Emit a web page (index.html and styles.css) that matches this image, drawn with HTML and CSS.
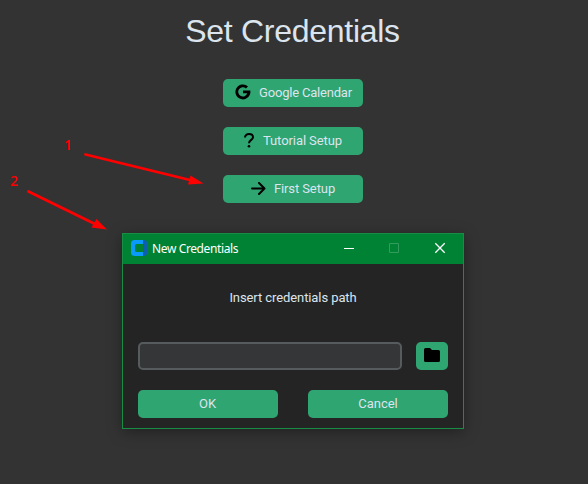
FILE: index.html
```html
<!DOCTYPE html>
<html lang="en">
<head>
<meta charset="utf-8">
<title>Set Credentials</title>
<link rel="stylesheet" href="styles.css">
</head>
<body>
<main class="page">
  <h1 class="heading">Set Credentials</h1>
  <div class="actions">
    <button class="btn google"><svg width="16" height="16" viewBox="0 0 16 16"><path d="M8 6.600h7.300A7.500 7.500 0 1 1 13 2.400l-2.100 2.100A4.600 4.600 0 1 0 12.200 9.300H8z"/></svg><span>Google Calendar</span></button>
    <button class="btn tutorial"><svg width="10" height="15" viewBox="0 0 10 15"><path d="M1 4.600C1 2.200 2.700 1 5 1s4 1.300 4 3.300C9 7 5 6.800 5 10.300" fill="none" stroke="#000" stroke-width="2"/><circle cx="5" cy="13.200" r="1.300"/></svg><span>Tutorial Setup</span></button>
    <button class="btn first"><svg width="15" height="13" viewBox="0 0 15 13"><path d="M1 6.500h12.500M8 1l5.500 5.500L8 12" fill="none" stroke="#000" stroke-width="2" stroke-linecap="round" stroke-linejoin="round"/></svg><span>First Setup</span></button>
  </div>
  <section class="window">
    <header class="titlebar">
      <svg class="logo" width="16" height="16" viewBox="0 0 16 16"><path d="M11 0h2a3 3 0 0 1 3 3v10a3 3 0 0 1-3 3h-2z" fill="#0b5fae"/><path d="M3.500 0H12v4H5.500Q4 4 4 5.500v5Q4 12 5.500 12H12v4H3.500A3.500 3.500 0 0 1 0 12.500v-9A3.500 3.500 0 0 1 3.500 0z" fill="#0a9bfa"/><path d="M11 4h1v8h-1z" fill="#008235"/></svg>
      <span class="title">New Credentials</span>
      <svg class="controls" width="102" height="12" viewBox="0 0 102 12" fill="none"><path d="M0 6.500h10" stroke="#fff"/><path d="M45.500 1.500h9v9h-9z" stroke="#339b5d"/><path d="M91.300 1.300l9.400 9.400M100.700 1.300l-9.400 9.400" stroke="#fff" stroke-width="1.300"/></svg>
    </header>
    <div class="content">
      <label class="prompt" for="path">Insert credentials path</label>
      <div class="path-row">
        <input id="path" class="path" type="text">
        <button class="btn browse" aria-label="Browse"><svg width="16" height="14" viewBox="0 0 16 14"><path d="M1.500 0H6l2 2h6.500A1.500 1.500 0 0 1 16 3.500v9a1.500 1.500 0 0 1-1.500 1.500h-13A1.500 1.500 0 0 1 0 12.500v-11A1.500 1.500 0 0 1 1.500 0z"/></svg></button>
      </div>
      <div class="choices"><button class="btn ok">OK</button><button class="btn">Cancel</button></div>
    </div>
  </section>
  <svg class="arrows" width="588" height="484" viewBox="0 0 588 484" stroke="#f00" fill="#f00"><path d="M85.500 154.500L192 180.500M28.500 191.500L97 225" stroke-width="2.800" stroke-linecap="round"/><path d="M203.500 183.500L190.500 175.500l-2.500 9zM107 229.500L96.500 219l-5 8.500z" stroke="none"/></svg>
  <span class="step one">1</span>
  <span class="step two">2</span>
</main>
</body>
</html>
```

FILE: styles.css
```css
* { box-sizing: border-box; }
body { margin: 0; background: #333; overflow: hidden; }
.page {
  position: relative;
  width: 588px;
  height: 484px;
  display: flex;
  flex-direction: column;
  align-items: center;
  background: #333;
}
.heading {
  margin: 13px 3px 0 0;
  height: 36px;
  font: 400 32px/36px "Liberation Sans", sans-serif;
  letter-spacing: -0.28px;
  color: #dce4ee;
}
.actions {
  display: flex;
  flex-direction: column;
  gap: 20px;
  margin: 30px 2px 0 0;
}
.btn {
  display: flex;
  align-items: center;
  justify-content: center;
  width: 140px;
  height: 28px;
  padding: 0;
  border: 0;
  border-radius: 5px;
  background: #2fa572;
  color: #dce4ee;
  font: 400 13px/28px Roboto, sans-serif;
}
.google { gap: 8px; letter-spacing: -0.2px; padding-left: 1px; }
.google svg { margin-top: -2px; }
.tutorial { gap: 9px; letter-spacing: -0.08px; }
.tutorial svg { margin-top: -1px; }
.first { gap: 8px; letter-spacing: -0.1px; }
.first svg { margin-top: -2px; }
.window {
  width: 342px;
  height: 196px;
  margin: 30px 2px 0 0;
  border: 1px solid #178e44;
  background: #242424;
  box-shadow: 0 3px 14px rgba(0, 0, 0, 0.35);
}
.titlebar {
  display: flex;
  align-items: center;
  height: 30px;
  padding: 0 17px 0 8px;
  background: #008235;
}
.logo { margin-top: -3px; }
.title {
  margin-left: 5px;
  color: #fff;
  font: 400 12px/30px "Noto Sans", sans-serif;
  letter-spacing: -0.38px;
}
.controls { margin: -2px 0 0 auto; }
.content { padding: 20px 15px 0; }
.prompt {
  display: block;
  height: 28px;
  text-align: center;
  color: #dce4ee;
  font: 400 13px/28px Roboto, sans-serif;
  letter-spacing: -0.09px;
}
.path-row { display: flex; justify-content: space-between; margin-top: 30px; }
.path {
  width: 264px;
  height: 28px;
  border: 2px solid #565b5e;
  border-radius: 5px;
  background: #343638;
  color: #dce4ee;
}
.browse { width: 32px; }
.browse svg { margin-top: -2px; }
.choices { display: flex; justify-content: space-between; margin-top: 20px; }
.ok { padding-right: 1px; }
.arrows { position: absolute; left: 0; top: 0; pointer-events: none; }
.step {
  position: absolute;
  color: #f00;
  font: 500 14px/18px "Noto Sans", sans-serif;
}
.one { left: 64px; top: 136px; }
.two { left: 10px; top: 172px; }
```
